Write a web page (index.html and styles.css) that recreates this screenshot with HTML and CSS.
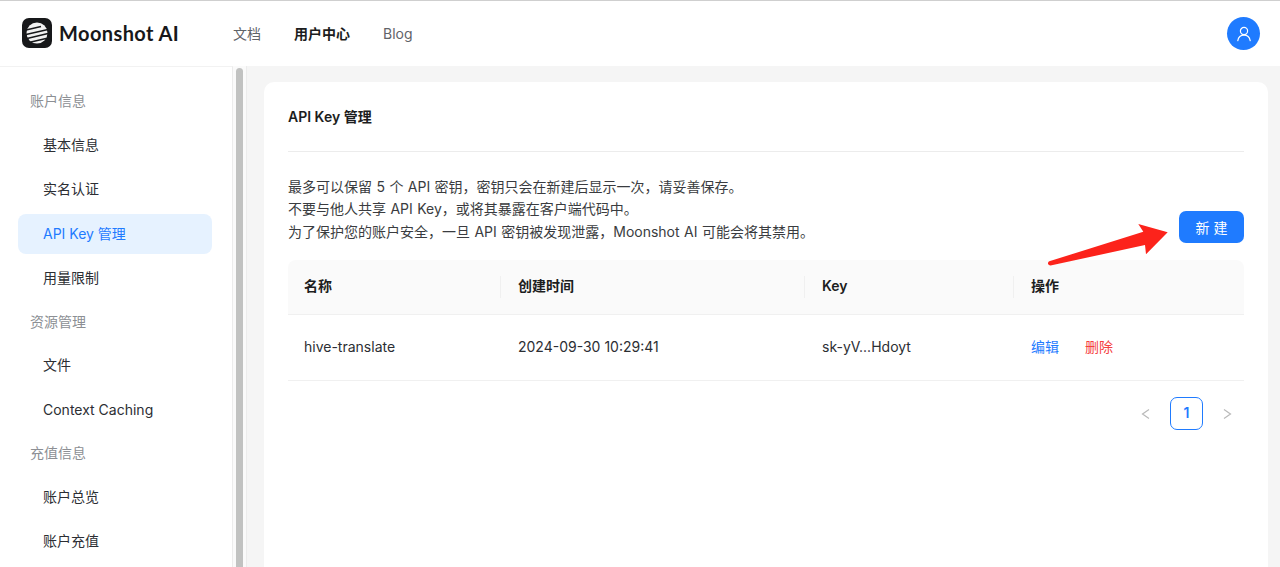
FILE: index.html
```html
<!DOCTYPE html>
<html lang="zh-CN">
<head>
    <meta charset="UTF-8">
    <meta name="viewport" content="width=device-width, initial-scale=1.0">
    <title>API Key 管理</title>
    <link rel="stylesheet" href="styles.css">
</head>
<body>
    <header id="main-header">
        <div class="logo">
            <svg class="logo-mark" width="30" height="30" viewBox="0 0 30 30">
                <rect width="30" height="30" rx="7" fill="#17181a"/>
                <circle cx="15" cy="15" r="10.5" fill="#f2f2f2"/>
                <path d="M4 12 L19 8.5 M4 16.5 L26 11.5 M5 20.5 L26 15.5 M9 24 L24 20.5" stroke="#17181a" stroke-width="1.4" fill="none"/>
            </svg>
            <span class="logo-text">Moonshot AI</span>
        </div>
        <nav class="top-nav">
            <a>文档</a>
            <a class="current">用户中心</a>
            <a>Blog</a>
        </nav>
        <div class="avatar">
            <svg width="16" height="16" viewBox="0 0 16 16" fill="none" stroke="#fff" stroke-width="1.2" stroke-linecap="round">
                <circle cx="8" cy="5" r="3.6"/>
                <path d="M1.8 14.6 C2.4 11.4 4.8 9.2 8 9.2 C11.2 9.2 13.6 11.4 14.2 14.6"/>
            </svg>
        </div>
    </header>

    <div class="layout">
        <aside class="sidebar">
            <div class="menu-group">账户信息</div>
            <a class="menu-item">基本信息</a>
            <a class="menu-item">实名认证</a>
            <a class="menu-item active">API Key 管理</a>
            <a class="menu-item">用量限制</a>
            <div class="menu-group">资源管理</div>
            <a class="menu-item">文件</a>
            <a class="menu-item">Context Caching</a>
            <div class="menu-group">充值信息</div>
            <a class="menu-item">账户总览</a>
            <a class="menu-item">账户充值</a>
        </aside>
        <div class="scroll-track"><div class="scroll-thumb"></div></div>

        <main class="content">
            <section class="card">
                <h2 class="card-title">API Key 管理</h2>
                <div class="intro-row">
                    <div class="intro">
                        <p>最多可以保留 5 个 API 密钥，密钥只会在新建后显示一次，请妥善保存。</p>
                        <p>不要与他人共享 API Key，或将其暴露在客户端代码中。</p>
                        <p>为了保护您的账户安全，一旦 API 密钥被发现泄露，Moonshot AI 可能会将其禁用。</p>
                    </div>
                    <button class="new-btn">新 建</button>
                </div>

                <table class="key-table">
                    <colgroup>
                        <col class="col-name">
                        <col class="col-time">
                        <col class="col-key">
                        <col>
                    </colgroup>
                    <thead>
                        <tr>
                            <th>名称</th>
                            <th>创建时间</th>
                            <th>Key</th>
                            <th>操作</th>
                        </tr>
                    </thead>
                    <tbody>
                        <tr>
                            <td>hive-translate</td>
                            <td>2024-09-30 10:29:41</td>
                            <td>sk-yV...Hdoyt</td>
                            <td class="row-actions"><a class="edit">编辑</a><a class="delete">删除</a></td>
                        </tr>
                    </tbody>
                </table>

                <div class="pager">
                    <svg width="10" height="10" viewBox="0 0 10 10" fill="none" stroke="#b9b9b9" stroke-width="1.2"><path d="M8 0.5 L1.5 5 L8 9.5"/></svg>
                    <span class="page-num">1</span>
                    <svg width="10" height="10" viewBox="0 0 10 10" fill="none" stroke="#b9b9b9" stroke-width="1.2"><path d="M2 0.5 L8.5 5 L2 9.5"/></svg>
                </div>
            </section>
        </main>
    </div>

    <!-- red arrow drawn over the screenshot -->
    <svg class="arrow" width="130" height="50" viewBox="0 0 130 50">
        <path d="M3.3 37.3 L97.3 7.7 L92.3 0 L121.7 8.3 L100 30.3 L99 21 L5.7 41.3 Q2.500 41.800 2 39.800 Q1.800 38 3.300 37.300 Z" fill="#fc231b"/>
    </svg>
</body>
</html>
```

FILE: styles.css
```css
* {
    box-sizing: border-box;
}

html, body {
    height: 567px;
    overflow: hidden;
}

body {
    margin: 0;
    position: relative;
    font-family: Inter, "Noto Sans CJK SC", sans-serif;
    font-size: 14px;
    color: #26282c;
    background-color: #f5f5f5;
}

p, h2 {
    margin: 0;
}

#main-header {
    height: 66px;
    display: flex;
    align-items: center;
    padding: 0 20px 0 22px;
    background-color: #fff;
    border-top: 1px solid #cfcfcf;
}

.logo {
    display: flex;
    align-items: center;
    gap: 7px;
    width: 211px;
    margin-bottom: 1px;
}

.logo-text {
    font-family: Lato, sans-serif;
    font-weight: 700;
    font-size: 20px;
    letter-spacing: 0.4px;
    color: #17181a;
}

.top-nav {
    display: flex;
    align-items: baseline;
    gap: 33px;
    margin-bottom: 1px;
    font-size: 14px;
    color: #5f6368;
}

.top-nav .current {
    font-weight: 600;
    color: #1c1d20;
}

.avatar {
    width: 33px;
    height: 33px;
    margin-left: auto;
    border-radius: 50%;
    background-color: #1f7bff;
    display: flex;
    align-items: center;
    justify-content: center;
}

.layout {
    display: flex;
    height: 501px;
    overflow: hidden;
}

.sidebar {
    width: 233px;
    flex: none;
    padding: 15px 20px 0 18px;
    background-color: #fff;
    border-right: 1px solid #ececec;
    border-top: 1px solid #f2f2f2;
}

.menu-group {
    height: 40px;
    margin-top: -1px;
    margin-bottom: 3.5px;
    padding-left: 12px;
    line-height: 40px;
    color: #8c8f94;
}

.menu-item {
    display: block;
    height: 40px;
    margin-bottom: 4.5px;
    padding-left: 25px;
    line-height: 40px;
    border-radius: 8px;
    color: #2c2e33;
}

.menu-item.active {
    background-color: #e6f2ff;
    color: #1f7bff;
}

.scroll-track {
    width: 14px;
    flex: none;
    padding: 2px 3px 0;
    background-color: #fafafa;
    border-right: 1px solid #ececec;
}

.scroll-thumb {
    height: 100%;
    border-radius: 4px 4px 0 0;
    background-color: #c1c2c1;
}

.content {
    flex: 1;
    padding: 16px 12px 0 17px;
}

.card {
    height: 100%;
    padding: 0 24px;
    background-color: #fff;
    border-radius: 10px 10px 0 0;
}

.card-title {
    height: 70px;
    line-height: 69px;
    font-size: 14px;
    font-weight: 600;
    color: #1c1d20;
    border-bottom: 1px solid #ececec;
}

.intro-row {
    position: relative;
    height: 108px;
    padding-top: 24px;
}

.intro {
    line-height: 22.4px;
    word-spacing: 0.5px;
    color: #3a3c40;
}

.new-btn {
    position: absolute;
    right: 0;
    top: 59px;
    width: 65px;
    height: 32px;
    border: none;
    border-radius: 7px;
    background-color: #1f7bff;
    color: #fff;
    font-family: inherit;
    font-size: 14px;
}

.key-table {
    width: 100%;
    table-layout: fixed;
    border-collapse: separate;
    border-spacing: 0;
}

.col-name {
    width: 214px;
}

.col-time {
    width: 304px;
}

.col-key {
    width: 209px;
}

.key-table th {
    position: relative;
    height: 55px;
    padding: 15px 16px 0;
    vertical-align: baseline;
    text-align: left;
    font-weight: 600;
    color: #1c1d20;
    background-color: #fafafa;
    border-bottom: 1px solid #f0f0f0;
}

.key-table th:first-child {
    border-top-left-radius: 8px;
}

.key-table th:last-child {
    border-top-right-radius: 8px;
}

.key-table th:not(:last-child)::after {
    content: "";
    position: absolute;
    right: 1px;
    top: 16px;
    height: 22px;
    width: 1px;
    background-color: #f0f0f0;
}

.key-table td {
    height: 66px;
    padding: 0 16px 2px;
    color: #2c2e33;
    border-bottom: 1px solid #f0f0f0;
}

.key-table .row-actions {
    padding-bottom: 4px;
}

.row-actions .edit {
    color: #1f7bff;
}

.row-actions .delete {
    margin-left: 26px;
    color: #f5403f;
}

.pager {
    display: flex;
    align-items: center;
    justify-content: flex-end;
    gap: 19px;
    margin-top: 16px;
    padding-right: 12px;
}

.page-num {
    width: 33px;
    height: 33px;
    line-height: 30px;
    text-align: center;
    font-weight: 600;
    color: #1f7bff;
    border: 1.5px solid #1f7bff;
    border-radius: 7px;
}

.arrow {
    position: absolute;
    left: 1046px;
    top: 224px;
}
```
